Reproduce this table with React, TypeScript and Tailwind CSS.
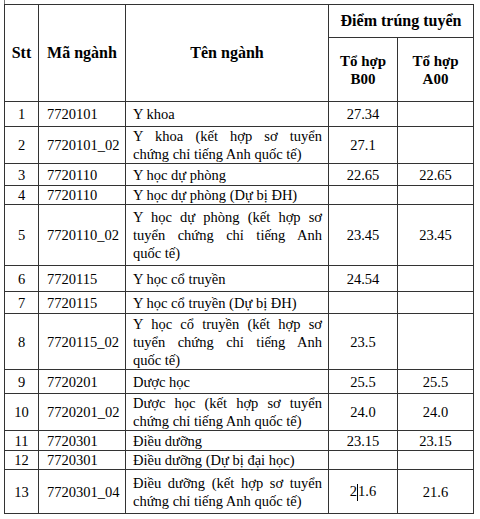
import React from "react";

type Row = {
  stt: string;
  ma: string;
  ten: string[];
  b: string;
  a: string;
  h: string;
};

const rows: Row[] = [
  { stt: "1", ma: "7720101", ten: ["Y khoa"], b: "27.34", a: "", h: "h-[25px]" },
  { stt: "2", ma: "7720101_02", ten: ["Y khoa (kết hợp sơ tuyển", "chứng chỉ tiếng Anh quốc tế)"], b: "27.1", a: "", h: "h-[37px]" },
  { stt: "3", ma: "7720110", ten: ["Y học dự phòng"], b: "22.65", a: "22.65", h: "h-[22px]" },
  { stt: "4", ma: "7720110", ten: ["Y học dự phòng (Dự bị ĐH)"], b: "", a: "", h: "h-[19px]" },
  { stt: "5", ma: "7720110_02", ten: ["Y học dự phòng (kết hợp sơ", "tuyển chứng chỉ tiếng Anh", "quốc tế)"], b: "23.45", a: "23.45", h: "h-[61px]" },
  { stt: "6", ma: "7720115", ten: ["Y học cổ truyền"], b: "24.54", a: "", h: "h-[26px]" },
  { stt: "7", ma: "7720115", ten: ["Y học cổ truyền (Dự bị ĐH)"], b: "", a: "", h: "h-[22px]" },
  { stt: "8", ma: "7720115_02", ten: ["Y học cổ truyền (kết hợp sơ", "tuyển chứng chỉ tiếng Anh", "quốc tế)"], b: "23.5", a: "", h: "h-[56px]" },
  { stt: "9", ma: "7720201", ten: ["Dược học"], b: "25.5", a: "25.5", h: "h-[24px]" },
  { stt: "10", ma: "7720201_02", ten: ["Dược học (kết hợp sơ tuyển", "chứng chỉ tiếng Anh quốc tế)"], b: "24.0", a: "24.0", h: "h-[37px]" },
  { stt: "11", ma: "7720301", ten: ["Điều dưỡng"], b: "23.15", a: "23.15", h: "h-[20px]" },
  { stt: "12", ma: "7720301", ten: ["Điều dưỡng (Dự bị đại học)"], b: "", a: "", h: "h-[19px]" },
  { stt: "13", ma: "7720301_04", ten: ["Điều dưỡng (kết hợp sơ tuyển", "chứng chỉ tiếng Anh quốc tế)"], b: "2|1.6", a: "21.6", h: "h-[44px]" },
];

const cell = "border border-[#333] p-0 align-middle font-['Liberation_Serif']";

function Score({ v }: { v: string }) {
  if (v.includes("|")) {
    const [l, r] = v.split("|");
    return (
      <span>
        {l}
        <span className="inline-block w-px h-[17px] bg-black align-middle" />
        {r}
      </span>
    );
  }
  return <span>{v}</span>;
}

export default function App() {
  return (
    <div className="w-[480px] h-[519px] bg-white text-black font-serif overflow-hidden">
      <div className="ml-[4px] h-[4px] w-px bg-[#777]" />
      <table className="table-fixed border-collapse ml-[4px] w-[469px]">
        <colgroup>
          <col className="w-[34px]" />
          <col className="w-[87px]" />
          <col className="w-[203px]" />
          <col className="w-[69px]" />
          <col className="w-[76px]" />
        </colgroup>
        <thead>
          <tr className="h-[33px]">
            <th rowSpan={2} className={`${cell} text-[16px] font-bold text-center`}>Stt</th>
            <th rowSpan={2} className={`${cell} text-[16px] font-bold text-center`}>Mã ngành</th>
            <th rowSpan={2} className={`${cell} text-[16px] font-bold text-center`}>Tên ngành</th>
            <th colSpan={2} className={`${cell} text-[16px] font-bold text-center`}>Điểm trúng tuyển</th>
          </tr>
          <tr className="h-[64px]">
            <th className={`${cell} text-[15px] leading-[18px] font-bold text-center`}>
              Tổ hợp<br />B00
            </th>
            <th className={`${cell} text-[15px] leading-[18px] font-bold text-center`}>
              Tổ hợp<br />A00
            </th>
          </tr>
        </thead>
        <tbody className="text-[14.5px] leading-[18px]">
          {rows.map((r) => (
            <tr key={r.stt} className={r.h}>
              <td className={`${cell} text-center`}>{r.stt}</td>
              <td className={`${cell} pl-[8px]`}>{r.ma}</td>
              <td className={`${cell} pl-[7px] pr-[6px]`}>
                {r.ten.map((line, i) => (
                  <div
                    key={i}
                    className={
                      i < r.ten.length - 1
                        ? "text-justify [text-align-last:justify] whitespace-nowrap"
                        : "whitespace-nowrap"
                    }
                  >
                    {line}
                  </div>
                ))}
              </td>
              <td className={`${cell} text-center`}>
                <Score v={r.b} />
              </td>
              <td className={`${cell} text-center`}>
                <Score v={r.a} />
              </td>
            </tr>
          ))}
        </tbody>
      </table>
    </div>
  );
}
